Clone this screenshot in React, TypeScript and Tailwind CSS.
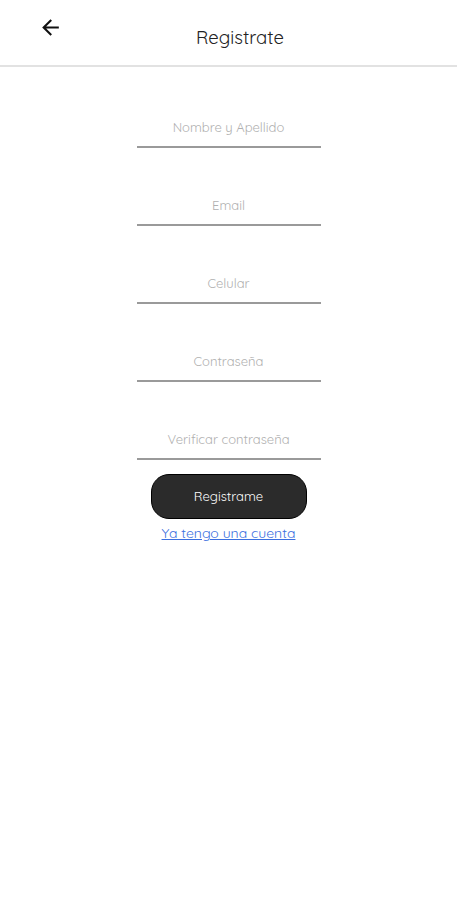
import React from "react";

const font = { fontFamily: "Quicksand, 'Noto Sans', Lato, sans-serif" };

function Field({ label }: { label: string }) {
  return (
    <div className="w-[184px] h-[78px] flex flex-col justify-end">
      <div className="text-center text-[13px] text-[#b0b0b0] leading-none mb-[12px]">{label}</div>
      <div className="h-[2px] bg-[#9a9a9a]" />
    </div>
  );
}

export default function App() {
  return (
    <div className="w-[457px] h-[900px] bg-white" style={font}>
      <div className="relative h-[67px] border-b-2 border-[#e2e2e2] flex justify-center pl-[23px]">
        <svg className="absolute left-[38px] top-[15px]" width="25" height="25" viewBox="0 0 24 24">
          <path d="M20 11H7.83l5.59-5.59L12 4l-8 8 8 8 1.41-1.41L7.83 13H20v-2z" fill="#111" />
        </svg>
        <div className="mt-[28px] text-[18.5px] text-[#222] leading-none">Registrate</div>
      </div>
      <div className="flex flex-col items-center pt-[3px]">
        <Field label="Nombre y Apellido" />
        <Field label="Email" />
        <Field label="Celular" />
        <Field label="Contraseña" />
        <Field label="Verificar contraseña" />
        <button className="mt-[14px] w-[156px] h-[45px] rounded-[18px] bg-[#2b2b2b] border border-black text-white text-[13px]">
          Registrame
        </button>
        <a href="#" className="mt-[7px] text-[14px] text-[#3b6fe0] underline leading-none">
          Ya tengo una cuenta
        </a>
      </div>
    </div>
  );
}
